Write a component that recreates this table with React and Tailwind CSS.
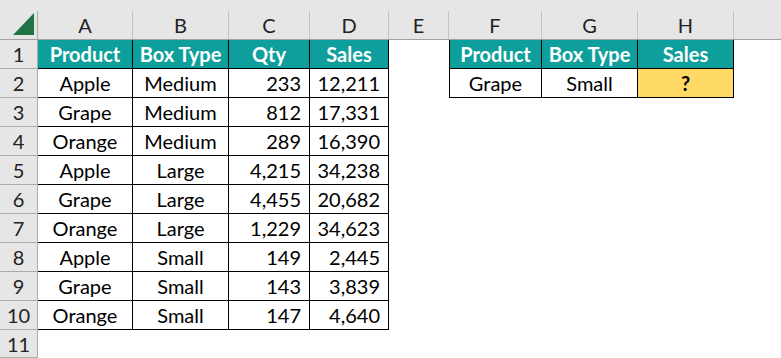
import React from 'react';

const cols = [
  { key: 'A', w: 'w-[95px]' },
  { key: 'B', w: 'w-[96px]' },
  { key: 'C', w: 'w-[81px]' },
  { key: 'D', w: 'w-[79px]' },
  { key: 'E', w: 'w-[60px]' },
  { key: 'F', w: 'w-[93px]' },
  { key: 'G', w: 'w-[96px]' },
  { key: 'H', w: 'w-[96px]' },
];

const data = [
  ['Apple', 'Medium', '233', '12,211'],
  ['Grape', 'Medium', '812', '17,331'],
  ['Orange', 'Medium', '289', '16,390'],
  ['Apple', 'Large', '4,215', '34,238'],
  ['Grape', 'Large', '4,455', '20,682'],
  ['Orange', 'Large', '1,229', '34,623'],
  ['Apple', 'Small', '149', '2,445'],
  ['Grape', 'Small', '143', '3,839'],
  ['Orange', 'Small', '147', '4,640'],
];

const teal = 'bg-[#0e9f9c] text-white font-bold';

function Cell({ w, className = '', children }) {
  return (
    <div className={`${w} h-full shrink-0 flex items-center box-border ${className}`}>
      {children}
    </div>
  );
}

function RowHead({ n }) {
  return (
    <div className="w-[38px] h-full shrink-0 flex items-center justify-center bg-[#e6e6e6] text-[#222] border-r border-b border-[#ababab] box-border">
      {n}
    </div>
  );
}

export default function App() {
  return (
    <div
      className="w-[781px] h-[358px] overflow-hidden bg-white text-[20px] text-black"
      style={{ fontFamily: 'Lato, "Noto Sans", sans-serif' }}
    >
      {/* top strip */}
      <div className="h-[11px] bg-[#e6e6e6]" />

      {/* column headers */}
      <div className="h-[29px] flex bg-[#e6e6e6] border-b border-[#a0a0a0] box-border">
        <div className="w-[38px] h-full shrink-0 relative border-r border-[#ababab] box-border">
          <svg width="22" height="22" viewBox="0 0 22 22" className="absolute left-[13px] top-[2px]">
            <polygon points="21,0 21,22 0,22" fill="#217346" />
          </svg>
        </div>
        {cols.map(c => (
          <Cell key={c.key} w={c.w} className="justify-center border-r border-[#c4c4c4] text-[#222]">
            {c.key}
          </Cell>
        ))}
        <div className="flex-1" />
      </div>

      {/* row 1 */}
      <div className="h-[29px] flex">
        <RowHead n={1} />
        <Cell w="w-[95px]" className={`${teal} justify-center border-r border-b border-black`}>Product</Cell>
        <Cell w="w-[96px]" className={`${teal} justify-center border-r border-b border-black`}>Box Type</Cell>
        <Cell w="w-[81px]" className={`${teal} justify-center border-r border-b border-black`}>Qty</Cell>
        <Cell w="w-[79px]" className={`${teal} justify-center border-r border-b border-black`}>Sales</Cell>
        <Cell w="w-[60px]" />
        <Cell w="w-[93px]" className={`${teal} justify-center border-l border-r border-b border-black`}>Product</Cell>
        <Cell w="w-[96px]" className={`${teal} justify-center border-r border-b border-black`}>Box Type</Cell>
        <Cell w="w-[96px]" className={`${teal} justify-center border-r border-b border-black`}>Sales</Cell>
      </div>

      {data.map((r, i) => (
        <div key={i} className="h-[29px] flex">
          <RowHead n={i + 2} />
          <Cell w="w-[95px]" className="justify-center border-r border-b border-black">{r[0]}</Cell>
          <Cell w="w-[96px]" className="justify-center border-r border-b border-black">{r[1]}</Cell>
          <Cell w="w-[81px]" className="justify-end pr-[8px] border-r border-b border-black">{r[2]}</Cell>
          <Cell w="w-[79px]" className="justify-end pr-[8px] border-r border-b border-black">{r[3]}</Cell>
          {i === 0 && (
            <>
              <Cell w="w-[60px]" />
              <Cell w="w-[93px]" className="justify-center border-l border-r border-b border-black">Grape</Cell>
              <Cell w="w-[96px]" className="justify-center border-r border-b border-black">Small</Cell>
              <Cell w="w-[96px]" className="justify-center bg-[#ffd966] font-bold border-r border-b border-black">?</Cell>
            </>
          )}
        </div>
      ))}

      <div className="h-[28px] flex">
        <RowHead n={11} />
      </div>
    </div>
  );
}
